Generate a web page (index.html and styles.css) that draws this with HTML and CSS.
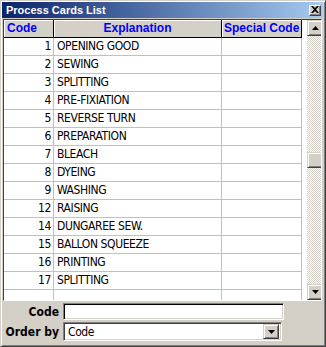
FILE: index.html
```html
<!DOCTYPE html>
<html>
<head>
<meta charset="utf-8">
<link rel="stylesheet" href="styles.css">
</head>
<body>
<div class="window">
  <div class="titlebar">
    <span class="title">Process Cards List</span>
    <span class="close"><svg width="8" height="7" viewBox="0 0 8 7"><path d="M0 0h2l2 2 2-2h2L5 3.5 8 7H6L4 5 2 7H0l3-3.5z" fill="#000"/></svg></span>
  </div>
  <div class="grid">
    <div class="table">
      <div class="hrow">
        <div class="hc c1">Code</div>
        <div class="hc c2">Explanation</div>
        <div class="hc c3">Special Code</div>
      </div>
      <div class="row"><div class="cell c1 num">1</div><div class="cell c2">OPENING GOOD</div><div class="cell c3"></div></div>
      <div class="row"><div class="cell c1 num">2</div><div class="cell c2">SEWING</div><div class="cell c3"></div></div>
      <div class="row"><div class="cell c1 num">3</div><div class="cell c2">SPLITTING</div><div class="cell c3"></div></div>
      <div class="row"><div class="cell c1 num">4</div><div class="cell c2">PRE-FIXIATION</div><div class="cell c3"></div></div>
      <div class="row"><div class="cell c1 num">5</div><div class="cell c2">REVERSE TURN</div><div class="cell c3"></div></div>
      <div class="row"><div class="cell c1 num">6</div><div class="cell c2">PREPARATION</div><div class="cell c3"></div></div>
      <div class="row"><div class="cell c1 num">7</div><div class="cell c2">BLEACH</div><div class="cell c3"></div></div>
      <div class="row"><div class="cell c1 num">8</div><div class="cell c2">DYEING</div><div class="cell c3"></div></div>
      <div class="row"><div class="cell c1 num">9</div><div class="cell c2">WASHING</div><div class="cell c3"></div></div>
      <div class="row"><div class="cell c1 num">12</div><div class="cell c2">RAISING</div><div class="cell c3"></div></div>
      <div class="row"><div class="cell c1 num">14</div><div class="cell c2">DUNGAREE SEW.</div><div class="cell c3"></div></div>
      <div class="row"><div class="cell c1 num">15</div><div class="cell c2">BALLON SQUEEZE</div><div class="cell c3"></div></div>
      <div class="row"><div class="cell c1 num">16</div><div class="cell c2">PRINTING</div><div class="cell c3"></div></div>
      <div class="row"><div class="cell c1 num">17</div><div class="cell c2">SPLITTING</div><div class="cell c3"></div></div>
      <div class="row partial"><div class="cell c1"></div><div class="cell c2"></div><div class="cell c3"></div></div>
    </div>
    <div class="vscroll">
      <div class="sbtn"><svg width="7" height="4" viewBox="0 0 7 4"><path d="M3.5 0L7 4H0z" fill="#000"/></svg></div>
      <div class="track">
        <div class="track-top"></div>
        <div class="thumb"></div>
        <div class="track-bottom"></div>
      </div>
      <div class="sbtn"><svg width="7" height="4" viewBox="0 0 7 4"><path d="M0 0h7L3.5 4z" fill="#000"/></svg></div>
    </div>
  </div>
  <div class="filters">
    <div class="frow">
      <label class="flabel">Code</label>
      <div class="textbox"></div>
    </div>
    <div class="frow">
      <label class="flabel">Order by</label>
      <div class="combo">
        <span class="combo-value">Code</span>
        <span class="combo-btn"><svg width="7" height="4" viewBox="0 0 7 4"><path d="M0 0h7L3.5 4z" fill="#000"/></svg></span>
      </div>
    </div>
  </div>
</div>
</body>
</html>
```

FILE: styles.css
```css
* { box-sizing: border-box; }
html, body { margin: 0; padding: 0; background: #d4d0c8; }
.window {
  width: 326px;
  height: 347px;
  background: #d4d0c8;
  border-top: 1px solid #d4d0c8;
  border-left: 1px solid #d4d0c8;
  border-right: 1px solid #404040;
  border-bottom: 1px solid #404040;
  box-shadow: inset 1px 1px 0 #fff, inset -1px -1px 0 #808080;
  padding: 1px 2px 2px 1px;
  display: flex;
  flex-direction: column;
  overflow: hidden;
}
.titlebar {
  height: 16px;
  flex: none;
  background: linear-gradient(to right, #0a246a, #a6caf0);
  display: flex;
  align-items: center;
  justify-content: space-between;
  padding: 0 2px 0 4px;
}
.title {
  color: #fff;
  font: bold 11px "Liberation Sans", Arial, sans-serif;
  white-space: nowrap;
}
.close {
  width: 12px;
  height: 11px;
  background: #d4d0c8;
  border-top: 1px solid #fff;
  border-left: 1px solid #fff;
  border-right: 1px solid #404040;
  border-bottom: 1px solid #404040;
  box-shadow: inset -1px -1px 0 #808080;
  display: flex;
  align-items: center;
  justify-content: center;
  padding-bottom: 1px;
}
.close svg { display: block; }
.grid {
  flex: none;
  margin: 1px 0 0 1px;
  width: 319px;
  height: 282px;
  border: 1px solid #404040;
  border-right-color: #fff;
  border-bottom-color: #fff;
  background: #fff;
  display: flex;
  overflow: hidden;
}
.table {
  width: 301px;
  flex: none;
  background: #fff;
}
.hrow { display: flex; height: 18px; }
.hc {
  height: 18px;
  background: #d4d0c8;
  border-right: 1px solid #000;
  border-bottom: 1px solid #000;
  box-shadow: inset 1px 1px 0 #fff;
  color: #0000ff;
  font: bold 12px "Liberation Sans", Arial, sans-serif;
  line-height: 17px;
  white-space: nowrap;
  overflow: hidden;
}
.c1 { width: 50px; flex: none; }
.c2 { width: 168px; flex: none; }
.c3 { width: 80px; flex: none; }
.hc.c1 { padding-left: 3px; }
.hc.c2 { text-align: center; }
.hc.c3 { padding-left: 2px; }
.row { display: flex; height: 18px; }
.row.partial { height: 10px; }
.cell {
  height: 100%;
  border-right: 1px solid #c0c0c0;
  border-bottom: 1px solid #c0c0c0;
  font: 12px "DejaVu Sans Condensed", "DejaVu Sans", sans-serif;
  font-stretch: condensed;
  letter-spacing: -0.4px;
  line-height: 17px;
  color: #000;
  white-space: nowrap;
  padding-left: 3px;
}
.row.partial .cell { border-bottom: none; }
.cell.num { text-align: right; padding-right: 2px; padding-left: 0; }
.vscroll {
  width: 16px;
  flex: none;
  margin-left: 2px;
  display: flex;
  flex-direction: column;
}
.sbtn {
  width: 16px;
  height: 16px;
  flex: none;
  background: #d4d0c8;
  border-top: 1px solid #d4d0c8;
  border-left: 1px solid #d4d0c8;
  border-right: 1px solid #404040;
  border-bottom: 1px solid #404040;
  box-shadow: inset 1px 1px 0 #fff, inset -1px -1px 0 #808080;
  display: flex;
  align-items: center;
  justify-content: center;
}
.sbtn svg { display: block; }
.track {
  flex: 1;
  display: flex;
  flex-direction: column;
  background-color: #fff;
  background-image: repeating-conic-gradient(#d4d0c8 0 25%, #fff 0 50%);
  background-size: 2px 2px;
}
.track-top { height: 116px; flex: none; }
.thumb {
  height: 16px;
  flex: none;
  background: #d4d0c8;
  border-top: 1px solid #d4d0c8;
  border-left: 1px solid #d4d0c8;
  border-right: 1px solid #404040;
  border-bottom: 1px solid #404040;
  box-shadow: inset 1px 1px 0 #fff, inset -1px -1px 0 #808080;
}
.track-bottom { flex: 1; }
.filters {
  flex: none;
  display: flex;
  flex-direction: column;
  gap: 2px;
  padding-top: 2px;
}
.frow { display: flex; align-items: center; gap: 4px; }
.flabel {
  width: 57px;
  flex: none;
  text-align: right;
  white-space: nowrap;
  font: bold 12px "DejaVu Sans Condensed", "DejaVu Sans", sans-serif;
  font-stretch: condensed;
  color: #000;
}
.textbox {
  width: 221px;
  height: 17px;
  background: #fff;
  border-top: 1px solid #808080;
  border-left: 1px solid #808080;
  border-right: 1px solid #fff;
  border-bottom: 1px solid #fff;
  box-shadow: inset 1px 1px 0 #000, inset -1px -1px 0 #d4d0c8;
}
.combo {
  width: 219px;
  height: 19px;
  background: #fff;
  border-top: 1px solid #808080;
  border-left: 1px solid #808080;
  border-right: 1px solid #fff;
  border-bottom: 1px solid #fff;
  box-shadow: inset 1px 1px 0 #404040, inset -1px -1px 0 #d4d0c8;
  display: flex;
  align-items: center;
  justify-content: space-between;
  padding: 2px 2px 2px 4px;
}
.combo-value {
  font: 12px "DejaVu Sans Condensed", "DejaVu Sans", sans-serif;
  font-stretch: condensed;
  letter-spacing: -0.4px;
  color: #000;
}
.combo-btn {
  width: 16px;
  height: 15px;
  background: #d4d0c8;
  border-top: 1px solid #d4d0c8;
  border-left: 1px solid #d4d0c8;
  border-right: 1px solid #404040;
  border-bottom: 1px solid #404040;
  box-shadow: inset 1px 1px 0 #fff, inset -1px -1px 0 #808080;
  display: flex;
  align-items: center;
  justify-content: center;
}
```
